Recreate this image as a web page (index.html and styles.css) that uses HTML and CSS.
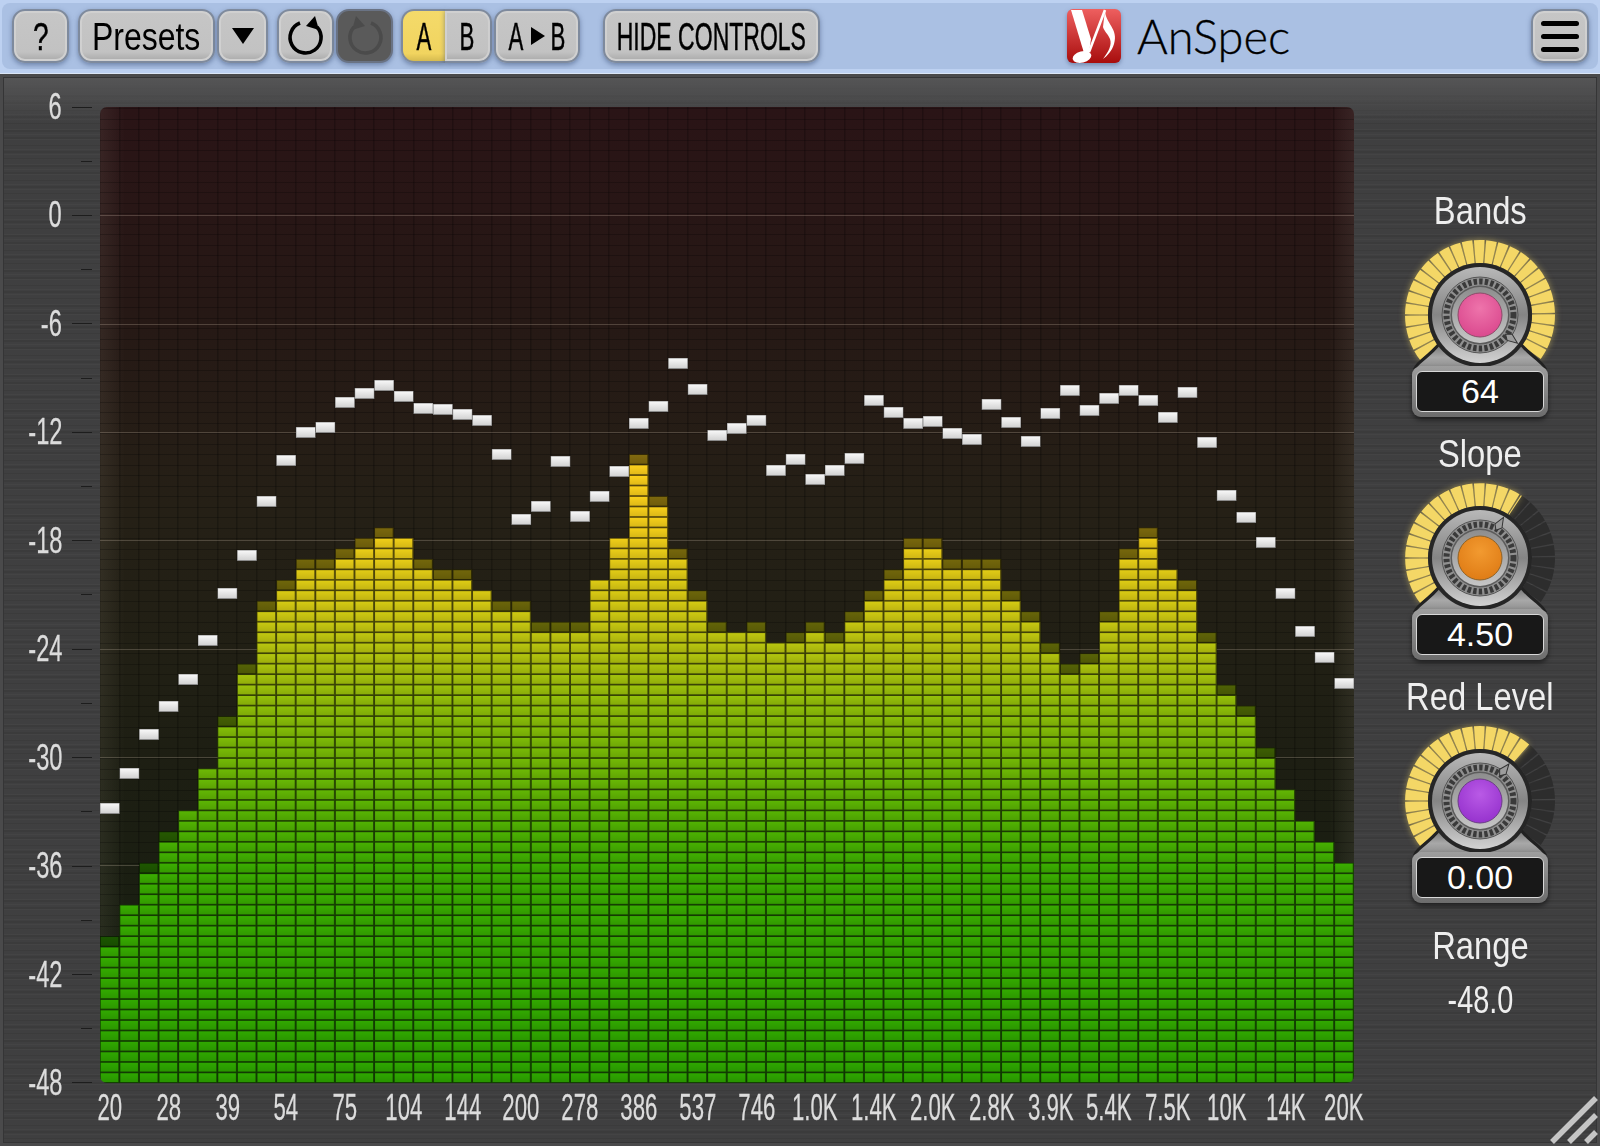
FILE: index.html
```html
<!DOCTYPE html>
<html>

<head>
    <meta charset="utf-8">
    <title>AnSpec</title>
    <link rel="stylesheet" href="styles.css">
</head>

<body>
    <!-- shared knob parts -->
    <svg class="defs" width="0" height="0">
        <defs>
            <linearGradient id="plate" x1="0" y1="0" x2="0" y2="1">
                <stop offset="0" stop-color="#6f6f6f" />
                <stop offset=".55" stop-color="#a8a8a8" />
                <stop offset="1" stop-color="#8b8b8b" />
            </linearGradient>
            <linearGradient id="metal" x1="0" y1="0" x2="0" y2="1">
                <stop offset="0" stop-color="#b8b8b8" />
                <stop offset=".5" stop-color="#858585" />
                <stop offset="1" stop-color="#d2d2d2" />
            </linearGradient>
            <linearGradient id="flat" x1="0" y1="0" x2="0" y2="1">
                <stop offset="0" stop-color="#8d8d8d" />
                <stop offset="1" stop-color="#c6c6c6" />
            </linearGradient>
            <radialGradient id="pink" cx=".5" cy=".35" r=".7">
                <stop offset="0" stop-color="#ee74ab" />
                <stop offset="1" stop-color="#d9468c" />
            </radialGradient>
            <radialGradient id="orange" cx=".5" cy=".35" r=".7">
                <stop offset="0" stop-color="#f29a30" />
                <stop offset="1" stop-color="#de7a14" />
            </radialGradient>
            <radialGradient id="purple" cx=".5" cy=".35" r=".7">
                <stop offset="0" stop-color="#b95ae6" />
                <stop offset="1" stop-color="#9430cc" />
            </radialGradient>
            <g id="knob-back">
                <path class="arc-off" d="M29.3 118.2 A63.5 63.5 0 1 1 130.7 118.2" pathLength="254" />
            </g>
            <g id="knob-body">
                <path fill="#222" d="M13 134 C17 125 28 120 40 106 L120 106 C132 120 143 125 147 134 Z" />
                <path fill="url(#plate)" d="M16 134 C20 127 31 122 42 108 L118 108 C129 122 140 127 144 134 Z" />
                <circle cx="80" cy="80" r="52" fill="#262626" />
                <circle cx="80" cy="80" r="48" fill="url(#metal)" />
                <circle cx="80" cy="80" r="38" fill="#909090" stroke="#555" />
                <circle class="gear" cx="80" cy="80" r="33.5" />
                <circle cx="80" cy="80" r="29.5" fill="#5c5c5c" />
                <circle cx="80" cy="80" r="28" fill="url(#flat)" />
            </g>
        </defs>
    </svg>

    <div class="toolbar">
        <div class="toolbar-inner">
            <button class="btn btn-help"><span class="squeeze">?</span></button>
            <button class="btn btn-presets"><span class="squeeze">Presets</span></button>
            <button class="btn btn-arrow">
                <svg width="22" height="16" viewBox="0 0 22 16"><polygon points="0,0 22,0 11,16" fill="#000" /></svg>
            </button>
            <button class="btn btn-icon">
                <svg width="42" height="42" viewBox="0 0 42 42"><path d="M27 8 A15.5 15.5 0 1 1 10 12" fill="none" stroke="#000" stroke-width="3.6" transform="matrix(-1 0 0 1 42 0)" /><polygon points="30,1 34,15 21,11" fill="#000" /></svg>
            </button>
            <button class="btn btn-icon btn-off">
                <svg width="42" height="42" viewBox="0 0 42 42"><path d="M27 8 A15.5 15.5 0 1 1 10 12" fill="none" stroke="#4b4b4b" stroke-width="3.6" /><polygon points="12,1 8,15 21,11" fill="#4b4b4b" /></svg>
            </button>
            <div class="ab">
                <button class="btn btn-a"><span class="squeeze">A</span></button>
                <button class="btn btn-b"><span class="squeeze">B</span></button>
            </div>
            <button class="btn btn-copy"><span class="squeeze">A</span><svg width="14" height="18" viewBox="0 0 14 18"><polygon points="0,0 14,9 0,18" fill="#000" /></svg><span class="squeeze">B</span></button>
            <button class="btn btn-hide"><span class="squeeze">HIDE CONTROLS</span></button>

            <div class="brand">
                <svg class="logo" width="54" height="54" viewBox="0 0 54 54">
                    <defs>
                        <linearGradient id="logo-red" x1="0" y1="0" x2="0" y2="1">
                            <stop offset="0" stop-color="#ee5f5f" />
                            <stop offset="1" stop-color="#a80d0d" />
                        </linearGradient>
                    </defs>
                    <rect width="54" height="54" rx="6" fill="url(#logo-red)" />
                    <polygon points="4,1 15,1 24,30 22,44 17,44" fill="#fff" />
                    <path d="M38 1 L22 43" stroke="#fff" stroke-width="2.6" fill="none" />
                    <path d="M38 1 C38 14 52 20 47 35 C45 42 40 47 36 50 C42 42 45 36 43 30 C41 25 37 22 36 18 Z" fill="#fff" />
                    <ellipse cx="15" cy="48" rx="9.5" ry="5.6" fill="#fff" transform="rotate(-14 15 48)" />
                </svg>
                <span class="brand-name">AnSpec</span>
            </div>

            <button class="btn btn-menu"><i></i><i></i><i></i></button>
        </div>
    </div>

    <div class="panel">
        <div class="yaxis">
            <div class="tick"><span>6</span><i></i></div>
            <div class="tick minor"><i></i></div>
            <div class="tick"><span>0</span><i></i></div>
            <div class="tick minor"><i></i></div>
            <div class="tick"><span>-6</span><i></i></div>
            <div class="tick minor"><i></i></div>
            <div class="tick"><span>-12</span><i></i></div>
            <div class="tick minor"><i></i></div>
            <div class="tick"><span>-18</span><i></i></div>
            <div class="tick minor"><i></i></div>
            <div class="tick"><span>-24</span><i></i></div>
            <div class="tick minor"><i></i></div>
            <div class="tick"><span>-30</span><i></i></div>
            <div class="tick minor"><i></i></div>
            <div class="tick"><span>-36</span><i></i></div>
            <div class="tick minor"><i></i></div>
            <div class="tick"><span>-42</span><i></i></div>
            <div class="tick minor"><i></i></div>
            <div class="tick"><span>-48</span><i></i></div>
        </div>

        <div class="graph">
            <canvas id="spectrum" class="spectrum" width="1254" height="976"></canvas>
            <div class="xaxis">
                <span>20</span><span>28</span><span>39</span><span>54</span><span>75</span><span>104</span>
                <span>144</span><span>200</span><span>278</span><span>386</span><span>537</span><span>746</span>
                <span>1.0K</span><span>1.4K</span><span>2.0K</span><span>2.8K</span><span>3.9K</span><span>5.4K</span>
                <span>7.5K</span><span>10K</span><span>14K</span><span>20K</span>
            </div>
        </div>

        <div class="controls">
            <div class="ctrl">
                <div class="ctrl-label">Bands</div>
                <svg class="knob" width="160" height="132" viewBox="0 0 160 132">
                    <use href="#knob-back" />
                    <path class="arc-on" d="M29.3 118.2 A63.5 63.5 0 1 1 130.7 118.2" pathLength="254" />
                    <use href="#knob-body" />
                    <polygon class="pointer" points="80,33 76,43 80,48 84,43" transform="rotate(127 80 80)" />
                    <circle cx="80" cy="80" r="22" fill="url(#pink)" stroke="#8d4a68" />
                </svg>
                <div class="readout"><div>64</div></div>
            </div>
            <div class="ctrl">
                <div class="ctrl-label">Slope</div>
                <svg class="knob" width="160" height="132" viewBox="0 0 160 132">
                    <use href="#knob-back" />
                    <path class="arc-on" d="M29.3 118.2 A63.5 63.5 0 0 1 115.5 27.4" pathLength="161" />
                    <use href="#knob-body" />
                    <polygon class="pointer" points="80,33 76,43 80,48 84,43" transform="rotate(30 80 80)" />
                    <circle cx="80" cy="80" r="22" fill="url(#orange)" stroke="#8f6226" />
                </svg>
                <div class="readout"><div>4.50</div></div>
            </div>
            <div class="ctrl">
                <div class="ctrl-label">Red Level</div>
                <svg class="knob" width="160" height="132" viewBox="0 0 160 132">
                    <use href="#knob-back" />
                    <path class="arc-on" d="M29.3 118.2 A63.5 63.5 0 0 1 121.7 32.1" pathLength="168" />
                    <use href="#knob-body" />
                    <polygon class="pointer" points="80,33 76,43 80,48 84,43" transform="rotate(38 80 80)" />
                    <circle cx="80" cy="80" r="22" fill="url(#purple)" stroke="#6b3c86" />
                </svg>
                <div class="readout"><div>0.00</div></div>
            </div>
            <div class="range">
                <div class="ctrl-label">Range</div>
                <div class="range-value">-48.0</div>
            </div>
        </div>

        <svg class="grip" width="50" height="50" viewBox="0 0 50 50">
            <path d="M2 46 L46 2 M19 46 L46 19 M36 46 L46 36" stroke="#c4c4c4" stroke-width="5.5" fill="none" />
        </svg>
    </div>

    <script src="spectrum.js"></script>
</body>

</html>
```
FILE: styles.css
```css
* {
    box-sizing: border-box;
}

html,
body {
    margin: 0;
    padding: 0;
    height: 100%;
    overflow: hidden;
}

body {
    width: 1600px;
    height: 1146px;
    background-color: #3e3e3f;
    font-family: "Liberation Sans", Arial, sans-serif;
}

.defs {
    position: absolute;
}

.squeeze {
    display: inline-block;
    transform: scaleX(.57);
    -webkit-text-stroke: .5px #000;
}

/*toolbar*/

.toolbar {
    height: 74px;
    padding: 3px 2px 4px;
    background-color: #bdd1f1;
    border-bottom: 1px solid #dbe6f6;
}

.toolbar-inner {
    display: flex;
    align-items: center;
    height: 66px;
    padding: 0 9px 0 10px;
    background-color: #aac0e3;
    border-radius: 8px;
}

.btn {
    display: flex;
    align-items: center;
    justify-content: center;
    flex: none;
    height: 54px;
    padding: 0;
    font-family: inherit;
    font-size: 39px;
    line-height: 1;
    color: #000;
    background: linear-gradient(#c6c6c6, #c2c2c2 82%, #a9a9a9);
    border: 2px solid #7e8a9d;
    border-radius: 13px;
    box-shadow: 0 2px 5px rgba(60, 80, 120, .55), inset 0 0 0 2px #d0d0d0;
}

.btn-help {
    width: 57px;
}

.btn-help .squeeze {
    transform: scaleX(.72);
}

.btn-presets {
    width: 137px;
    margin-left: 9px;
    white-space: nowrap;
}

.btn-presets .squeeze {
    transform: scaleX(.82);
    -webkit-text-stroke: 0;
}

.btn-arrow {
    width: 51px;
    margin-left: 2px;
}

.btn-icon {
    width: 57px;
    margin-left: 9px;
}

.btn-off {
    margin-left: 2px;
    background: #5a5a5a;
    border-color: #6a7384;
    box-shadow: 0 2px 5px rgba(60, 80, 120, .55);
}

.ab {
    display: flex;
    margin-left: 8px;
}

.btn-a {
    width: 44px;
    background: linear-gradient(#f4da6a, #f1d45f 85%, #d6bb50);
    border-right: 0;
    border-radius: 13px 0 0 13px;
    box-shadow: 0 2px 5px rgba(60, 80, 120, .55);
}

.btn-b {
    width: 47px;
    border-left: 0;
    border-radius: 0 13px 13px 0;
}

.btn-copy {
    width: 86px;
    margin-left: 2px;
}

.btn-copy svg {
    margin-left: 2px;
}

.btn-hide {
    width: 217px;
    margin-left: 23px;
    white-space: nowrap;
}

.btn-hide .squeeze {
    transform: scaleX(.59);
}

.brand {
    display: flex;
    align-items: center;
    margin-left: 247px;
}

.logo {
    flex: none;
    filter: drop-shadow(0 2px 2px rgba(60, 80, 120, .5));
}

.brand-name {
    display: inline-block;
    margin-left: 16px;
    font-family: "Lato", "Open Sans", sans-serif;
    font-weight: 300;
    font-size: 47px;
    line-height: 1;
    color: #000;
    white-space: nowrap;
    -webkit-text-stroke: .3px #000;
}

.btn-menu {
    flex-direction: column;
    gap: 8px;
    width: 58px;
    margin-left: auto;
}

.btn-menu i {
    display: block;
    width: 38px;
    height: 5px;
    background-color: #000;
    border-radius: 3px;
}

/*main panel*/

.panel {
    position: relative;
    display: flex;
    height: 1072px;
    padding-top: 33px;
    background-color: #3f3f40;
    background-image:
        linear-gradient(#2f2f30, #555556 4px, rgba(80, 80, 81, .55) 28px, rgba(64, 64, 65, 0) 50px),
        repeating-linear-gradient(rgba(255, 255, 255, .025) 0 1px, rgba(0, 0, 0, 0) 1px 5px),
        repeating-linear-gradient(rgba(0, 0, 0, .07) 0 2px, rgba(0, 0, 0, 0) 2px 7px);
    box-shadow: inset 0 0 0 3px #4a4a4b, inset 0 0 0 4px #353536;
}

.yaxis {
    display: flex;
    flex-direction: column;
    justify-content: space-between;
    flex: none;
    width: 100px;
    height: 976px;
}

.tick {
    display: flex;
    align-items: center;
    justify-content: flex-end;
    height: 0;
    padding-right: 8px;
    font-size: 37px;
    color: #dcdcdc;
}

.tick span {
    display: inline-block;
    transform-origin: right center;
    transform: scaleX(.64);
    -webkit-text-stroke: .3px #dcdcdc;
}

.tick i {
    display: block;
    width: 20px;
    height: 1px;
    margin-left: 10px;
    background-color: #1d1d1d;
}

.tick.minor i {
    width: 11px;
}

.graph {
    flex: none;
    width: 1254px;
}

.spectrum {
    display: block;
    width: 1254px;
    height: 976px;
    border-radius: 7px;
}

.xaxis {
    display: flex;
    justify-content: space-between;
    margin-top: 6px;
    font-size: 37px;
    line-height: 37px;
    color: #dcdcdc;
    -webkit-text-stroke: .3px #dcdcdc;
}

.xaxis span {
    display: flex;
    justify-content: center;
    width: 19.6px;
    white-space: nowrap;
    transform: scaleX(.6);
}

/*knobs*/

.controls {
    display: flex;
    flex-direction: column;
    align-items: center;
    flex: none;
    width: 240px;
    margin-left: 6px;
    padding-top: 82px;
}

.ctrl {
    display: flex;
    flex-direction: column;
    align-items: center;
    height: 243px;
}

.ctrl-label {
    height: 44px;
    margin-bottom: 2px;
    font-size: 39px;
    line-height: 44px;
    color: #eee;
    white-space: nowrap;
    transform: scaleX(.84);
}

.knob {
    display: block;
    overflow: visible;
    margin-bottom: -1px;
}

.arc-off {
    fill: none;
    stroke: #2d2d2d;
    stroke-width: 23;
    stroke-dasharray: 8.2 1.21;
}

.arc-on {
    fill: none;
    stroke: #f4d766;
    stroke-width: 23;
    stroke-dasharray: 8.2 1.21;
    filter: drop-shadow(0 0 3px rgba(244, 215, 102, .55));
}

.gear {
    fill: none;
    stroke: #3a3a3a;
    stroke-width: 6;
    stroke-dasharray: 3.4 2.2;
}

.pointer {
    fill: #9c9c9c;
    stroke: #333;
}

.readout {
    position: relative;
    width: 136px;
    height: 51px;
    padding: 5px 4px;
    background: linear-gradient(#9e9e9e, #6c6c6c);
    border-radius: 9px;
    box-shadow: 0 3px 5px rgba(0, 0, 0, .5);
}

.readout div {
    height: 41px;
    font-size: 34px;
    line-height: 39px;
    text-align: center;
    color: #fff;
    background-color: #181818;
    border: 1px solid #d8d8d8;
    border-radius: 6px;
}

.range {
    display: flex;
    flex-direction: column;
    align-items: center;
    margin-top: 6px;
}

.range-value {
    margin-top: 8px;
    font-size: 39px;
    line-height: 44px;
    color: #eee;
    transform: scaleX(.74);
}

.grip {
    position: absolute;
    right: 0;
    bottom: 0;
}
```
FILE: spectrum.js
```js
(function() {
    var canvas = document.getElementById('spectrum');
    var ctx = canvas.getContext('2d');
    var W = canvas.width, H = canvas.height;
    var COLS = 64;
    var cw = W / COLS;
    var rh = 10.48;
    var ROWS = Math.ceil(H / rh);

    // solid cells per band
    var levels = [13, 17, 20, 23, 26, 30, 34, 39, 45, 47, 49, 49, 50, 51, 52, 52,
        49, 48, 48, 47, 45, 45, 43, 43, 43, 48, 52, 59, 55, 50, 46, 43,
        43, 43, 42, 42, 43, 42, 44, 46, 48, 51, 51, 49, 49, 49, 46, 44,
        41, 39, 40, 44, 50, 52, 49, 47, 42, 37, 35, 31, 28, 25, 23, 21];

    // 1 = a dimmed cell sits on top
    var fade = [1, 0, 1, 1, 0, 0, 1, 1, 1, 1, 1, 1, 1, 1, 1, 0,
        1, 1, 1, 0, 1, 1, 1, 1, 1, 0, 0, 1, 1, 1, 1, 1,
        0, 1, 0, 1, 1, 1, 1, 1, 1, 1, 1, 1, 1, 1, 1, 1,
        1, 1, 1, 1, 1, 1, 0, 1, 1, 1, 1, 1, 0, 0, 0, 0];

    // peak hold marker, center y as measured on the 1568 wide shot
    var peaks = [792, 758, 720, 692, 666, 627, 581, 544, 491, 451, 424, 419, 394, 385, 378, 388,
        400, 401, 406, 412, 445, 509, 496, 452, 506, 486, 462, 415, 398, 356, 381, 427,
        420, 412, 461, 450, 470, 461, 449, 392, 404, 415, 413, 425, 430, 396, 414, 432,
        405, 382, 402, 390, 382, 392, 409, 384, 433, 485, 507, 531, 581, 619, 644, 670];

    var stops = [
        [0, 43, 159, 0], [20, 56, 166, 0], [35, 136, 183, 8],
        [45, 203, 193, 18], [52, 232, 197, 24], [60, 247, 200, 28], [93, 247, 200, 28]
    ];

    function colorAt(row) {
        for (var i = 1; i < stops.length; i++) {
            if (row <= stops[i][0]) {
                var a = stops[i - 1], b = stops[i];
                var t = (row - a[0]) / (b[0] - a[0]);
                return [a[1] + (b[1] - a[1]) * t, a[2] + (b[2] - a[2]) * t, a[3] + (b[3] - a[3]) * t];
            }
        }
        return stops[stops.length - 1].slice(1);
    }

    function rgb(c, k) {
        return 'rgb(' + Math.round(c[0] * k) + ',' + Math.round(c[1] * k) + ',' + Math.round(c[2] * k) + ')';
    }

    function rowTop(row) {
        return H - (row + 1) * rh;
    }

    function drawCell(col, row, k) {
        var c = colorAt(row);
        var x = col * cw, y = rowTop(row);
        ctx.fillStyle = rgb(c, .42 * k);
        ctx.fillRect(x, y, cw, rh);
        var g = ctx.createLinearGradient(0, y, 0, y + rh);
        g.addColorStop(0, rgb(c, 1.06 * k));
        g.addColorStop(1, rgb(c, .92 * k));
        ctx.fillStyle = g;
        ctx.fillRect(x + .75, y + .75, cw - 2, rh - 1.75);
    }

    // background
    var bg = ctx.createLinearGradient(0, 0, 0, H);
    bg.addColorStop(0, '#2a1416');
    bg.addColorStop(.2, '#261815');
    bg.addColorStop(.42, '#252016');
    bg.addColorStop(.75, '#1b1e12');
    bg.addColorStop(1, '#172010');
    ctx.fillStyle = bg;
    ctx.fillRect(0, 0, W, H);

    // lighter at both sides of the screen
    var side = ctx.createLinearGradient(0, 0, W, 0);
    side.addColorStop(0, 'rgba(255,240,220,.07)');
    side.addColorStop(.02, 'rgba(255,240,220,0)');
    side.addColorStop(.98, 'rgba(255,240,220,0)');
    side.addColorStop(1, 'rgba(255,240,220,.07)');
    ctx.fillStyle = side;
    ctx.fillRect(0, 0, W, H);

    // dark mesh
    ctx.fillStyle = 'rgba(0,0,0,.22)';
    for (var r = 0; r <= ROWS; r++) {
        ctx.fillRect(0, Math.round(H - r * rh), W, 1);
    }
    for (var k = 0; k < COLS; k++) {
        ctx.fillRect(Math.round(k * cw) - 1, 0, 1.5, H);
    }

    // level lines every 6 dB
    var step = (H - 1) / 9;
    ctx.fillStyle = 'rgba(255,235,215,.2)';
    for (var l = 1; l < 9; l++) {
        ctx.fillRect(0, Math.round(l * step), W, 1);
    }

    // bars
    for (var col = 0; col < COLS; col++) {
        for (var row = 0; row < levels[col]; row++) {
            drawCell(col, row, 1);
        }
        if (fade[col]) {
            drawCell(col, levels[col], .5);
        }
    }

    // peak markers
    for (var p = 0; p < COLS; p++) {
        var px = p * cw, py = Math.round(peaks[p] * 1.0204 - 107 - rh / 2);
        ctx.fillStyle = '#8a8a8a';
        ctx.fillRect(px, py, cw, 11);
        var pg = ctx.createLinearGradient(0, py, 0, py + 11);
        pg.addColorStop(0, '#fafafa');
        pg.addColorStop(1, '#cfcfcf');
        ctx.fillStyle = pg;
        ctx.fillRect(px + .5, py + .5, cw - 1, 9.5);
    }
})();
```
